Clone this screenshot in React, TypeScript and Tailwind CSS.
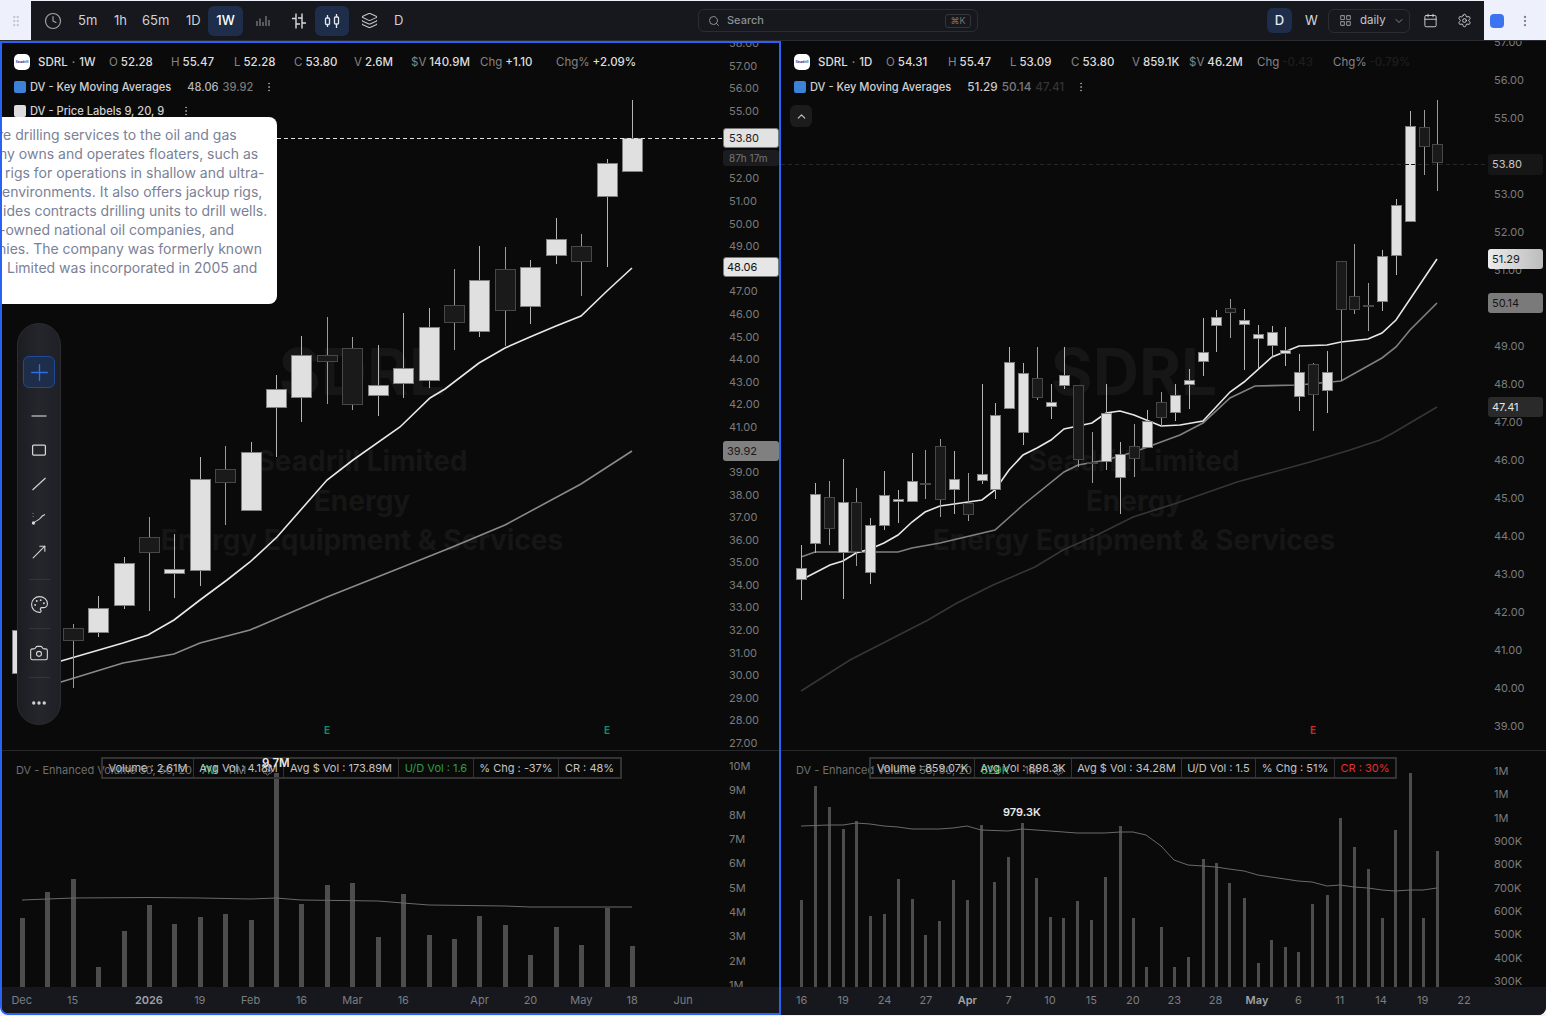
import { Fragment } from "react"
import {
  Calendar,
  Camera,
  ChevronDown,
  ChevronUp,
  Clock,
  Ellipsis,
  EllipsisVertical,
  GripVertical,
  LayoutGrid,
  Layers,
  Minus,
  MoveUpRight,
  Palette,
  Plus,
  Search,
  Settings,
} from "lucide-react"

type Candle = [x: number, wickTop: number, wickBottom: number, bodyTop: number, bodyBottom: number, up: number]
type Pt = [number, number]

const WEEK_CANDLES: Candle[] = [
  [22, 600, 690, 630, 673, 1],
  [47, 590, 660, 610, 640, 1],
  [73, 624, 688, 628, 640, 0],
  [98, 596, 637, 608, 632, 1],
  [124, 557, 609, 563, 605, 1],
  [149, 517, 611, 537, 552, 0],
  [174, 534, 598, 569, 573, 1],
  [200, 457, 586, 479, 570, 1],
  [225, 446, 525, 469, 482, 0],
  [251, 442, 510, 452, 510, 1],
  [276, 375, 457, 389, 407, 1],
  [301, 336, 422, 355, 397, 1],
  [327, 317, 404, 355, 361, 0],
  [352, 337, 410, 348, 404, 0],
  [378, 345, 416, 385, 395, 1],
  [403, 313, 398, 368, 383, 1],
  [429, 308, 388, 327, 380, 1],
  [454, 269, 350, 305, 322, 0],
  [479, 246, 337, 280, 331, 1],
  [505, 247, 346, 269, 310, 0],
  [530, 260, 324, 267, 306, 1],
  [556, 218, 264, 239, 255, 1],
  [581, 234, 296, 246, 261, 0],
  [607, 159, 267, 163, 196, 1],
  [632, 100, 138, 138, 171, 1],
]

const DAY_CANDLES: Candle[] = [
  [801, 545, 600, 568, 579, 1],
  [815, 483, 553, 494, 543, 1],
  [829, 481, 545, 497, 528, 0],
  [843, 459, 599, 502, 552, 1],
  [856, 488, 566, 502, 551, 0],
  [870, 518, 584, 525, 572, 1],
  [884, 471, 530, 495, 525, 1],
  [898, 490, 523, 499, 501, 1],
  [912, 453, 502, 481, 501, 1],
  [925, 450, 499, 483, 484, 0],
  [940, 439, 517, 446, 499, 0],
  [954, 451, 514, 479, 489, 1],
  [968, 473, 521, 503, 514, 0],
  [982, 384, 484, 474, 480, 1],
  [995, 403, 499, 415, 489, 1],
  [1009, 347, 408, 362, 408, 1],
  [1023, 363, 445, 373, 432, 1],
  [1037, 347, 400, 378, 397, 0],
  [1051, 384, 419, 402, 406, 1],
  [1064, 347, 389, 375, 385, 1],
  [1078, 385, 467, 385, 459, 0],
  [1092, 432, 483, 462, 463, 0],
  [1106, 384, 470, 413, 461, 1],
  [1120, 442, 514, 454, 477, 1],
  [1134, 424, 477, 446, 458, 0],
  [1147, 410, 448, 421, 447, 1],
  [1161, 392, 426, 402, 417, 0],
  [1175, 384, 421, 395, 412, 1],
  [1189, 369, 409, 380, 384, 1],
  [1203, 318, 376, 352, 361, 1],
  [1216, 310, 352, 317, 325, 1],
  [1230, 299, 338, 308, 312, 0],
  [1244, 309, 370, 320, 324, 1],
  [1258, 325, 368, 334, 338, 1],
  [1272, 326, 357, 332, 345, 1],
  [1285, 327, 366, 350, 353, 1],
  [1299, 354, 411, 372, 396, 1],
  [1313, 363, 431, 364, 394, 0],
  [1327, 351, 413, 372, 390, 1],
  [1341, 261, 381, 261, 309, 0],
  [1354, 244, 314, 296, 309, 0],
  [1368, 283, 331, 305, 306, 0],
  [1382, 250, 311, 256, 301, 1],
  [1396, 199, 275, 205, 255, 1],
  [1410, 111, 221, 126, 221, 1],
  [1424, 110, 175, 127, 146, 0],
  [1437, 100, 191, 144, 162, 0],
]

const WEEK_FAST: Pt[] = [[40, 667], [61, 661], [123, 643], [148, 635], [174, 620], [200, 600], [227, 580], [250, 562], [277, 537], [327, 480], [353, 460], [400, 427], [430, 398], [445, 389], [479, 363], [505, 348], [530, 337], [556, 326], [581, 316], [607, 291], [632, 268]]
const WEEK_SLOW: Pt[] = [[40, 688], [61, 682], [123, 663], [174, 654], [200, 643], [250, 630], [327, 597], [400, 568], [450, 548], [505, 525], [581, 484], [632, 451]]
const DAY_FAST: Pt[] = [[801, 580], [830, 565], [843, 561], [856, 553], [870, 549], [884, 543], [898, 535], [912, 522], [925, 512], [940, 506], [982, 500], [995, 490], [1009, 470], [1023, 455], [1037, 448], [1051, 440], [1064, 429], [1092, 423], [1106, 413], [1120, 411], [1134, 415], [1161, 426], [1180, 425], [1203, 421], [1230, 392], [1244, 382], [1272, 357], [1299, 346], [1327, 345], [1341, 342], [1368, 339], [1382, 333], [1396, 320], [1437, 259]]
const DAY_MID: Pt[] = [[801, 557], [815, 552], [856, 552], [898, 552], [912, 548], [940, 543], [995, 530], [1023, 505], [1064, 472], [1078, 465], [1106, 460], [1134, 452], [1161, 442], [1180, 435], [1203, 423], [1230, 398], [1255, 386], [1299, 385], [1341, 381], [1382, 358], [1396, 347], [1410, 330], [1437, 303]]
const DAY_SLOW: Pt[] = [[801, 691], [850, 660], [928, 620], [957, 603], [993, 585], [1035, 567], [1063, 550], [1097, 535], [1133, 517], [1177, 503], [1237, 482], [1310, 462], [1350, 450], [1380, 440], [1393, 433], [1437, 407]]

const WEEK_VOL: Pt[] = [[22, 918], [47, 892], [73, 879], [98, 967], [124, 931], [149, 905], [174, 924], [200, 917], [225, 914], [251, 920], [276, 773], [301, 904], [327, 885], [352, 883], [378, 937], [403, 894], [429, 935], [454, 939], [479, 916], [505, 925], [530, 955], [556, 927], [581, 945], [607, 908], [632, 946]]
const DAY_VOL: Pt[] = [[801, 900], [815, 786], [829, 807], [843, 829], [856, 821], [870, 916], [884, 914], [898, 879], [912, 899], [925, 935], [939, 921], [953, 880], [967, 900], [981, 825], [994, 882], [1008, 857], [1022, 823], [1036, 878], [1050, 917], [1063, 918], [1077, 901], [1091, 920], [1105, 877], [1120, 826], [1133, 918], [1146, 967], [1161, 927], [1174, 967], [1188, 957], [1203, 859], [1216, 863], [1229, 883], [1244, 898], [1258, 963], [1271, 940], [1285, 947], [1298, 952], [1312, 904], [1327, 895], [1340, 818], [1354, 847], [1368, 869], [1382, 918], [1395, 830], [1410, 773], [1423, 918], [1437, 851]]
const WEEK_VOL_AVG: Pt[] = [[22, 900], [73, 898], [149, 897.5], [200, 898], [251, 899], [276, 898], [301, 900], [378, 901], [403, 903], [429, 905], [505, 906], [530, 907], [632, 907]]
const DAY_VOL_AVG: Pt[] = [[801, 826], [829, 825], [843, 825], [856, 823], [870, 824], [884, 826], [898, 827], [912, 829], [925, 829], [939, 829], [953, 828], [967, 826], [981, 830], [1008, 831], [1022, 829], [1036, 830], [1050, 831], [1077, 833], [1091, 833], [1105, 833], [1120, 832], [1133, 832], [1146, 835], [1161, 846], [1174, 860], [1188, 865], [1203, 866], [1216, 867], [1229, 869], [1244, 871], [1258, 875], [1271, 877], [1285, 879], [1298, 881], [1312, 882], [1327, 886], [1340, 885], [1354, 887], [1368, 888], [1382, 890], [1395, 891], [1410, 890], [1423, 890], [1437, 888]]

const WEEK_PRICES = Array.from({ length: 32 }, (_, i) => `${58 - i}.00`)
// 54.00 sits right under the last-price tag, the reference doesn't show it
const DAY_PRICES = Array.from({ length: 19 }, (_, i) => (57 - i === 54 ? "" : `${57 - i}.00`))
const WEEK_VOL_AXIS = ["10M", "9M", "8M", "7M", "6M", "5M", "4M", "3M", "2M", "1M"]
const DAY_VOL_AXIS = ["1M", "1M", "1M", "900K", "800K", "700K", "600K", "500K", "400K", "300K"]
const WEEK_DATES = ["Dec", "", "15", "", "", "2026", "", "19", "", "Feb", "", "16", "", "Mar", "", "16", "", "", "Apr", "", "20", "", "May", "", "18", "", "Jun"]
const DAY_DATES = ["16", "19", "24", "27", "Apr", "7", "10", "15", "20", "23", "28", "May", "6", "11", "14", "19", "22"]

const ABOUT_LINES = [
  { text: "re drilling services to the oil and gas", cls: "-ml-[4px]" },
  { text: "ny owns and operates floaters, such as", cls: "-ml-[3px]" },
  { text: "rigs for operations in shallow and ultra-", cls: "ml-[3px]" },
  { text: "environments. It also offers jackup rigs,", cls: "ml-0" },
  { text: "ides contracts drilling units to drill wells.", cls: "ml-px" },
  { text: "-owned national oil companies, and", cls: "-ml-[3px]" },
  { text: "nies. The company was formerly known", cls: "-ml-[4px]" },
  { text: "Limited was incorporated in 2005 and", cls: "ml-[5px]" },
]

function toPath(points: Pt[]) {
  return points.map(([x, y], i) => `${i === 0 ? "M" : "L"}${x} ${y}`).join(" ")
}

function Candles({ data, width }: { data: Candle[]; width: number }) {
  return (
    <g>
      {data.map(([x, wt, wb, bt, bb, up]) => (
        <g key={x}>
          <line x1={x + 0.5} x2={x + 0.5} y1={wt} y2={wb} stroke={up ? "#b4b4b4" : "#9a9a9a"} strokeWidth={1} />
          <rect
            x={x + 0.5 - width / 2}
            y={bt + 0.5}
            width={width}
            height={Math.max(bb - bt, 1)}
            fill={up ? "#e0e0e0" : "#1a1a1a"}
            stroke={up ? "#808080" : "#484848"}
            strokeWidth={1}
          />
        </g>
      ))}
    </g>
  )
}

function Watermark({ cx }: { cx: number }) {
  return (
    <g fill="#161616" fontWeight={700} textAnchor="middle">
      <text x={cx} y={395} fontSize={64}>SDRL</text>
      <text x={cx} y={471} fontSize={28}>Seadrill Limited</text>
      <text x={cx} y={511} fontSize={28}>Energy</text>
      <text x={cx} y={550} fontSize={28}>Energy Equipment &amp; Services</text>
    </g>
  )
}

function WeekChart() {
  return (
    <svg viewBox="2 43 720 707" className="h-[707px] w-[720px] shrink-0">
      <Watermark cx={362} />
      <path d={toPath(WEEK_SLOW)} fill="none" stroke="#8a8a8a" strokeWidth={1.6} />
      <path d={toPath(WEEK_FAST)} fill="none" stroke="#e8e8e8" strokeWidth={1.6} />
      <Candles data={WEEK_CANDLES} width={20} />
      <line x1={277} x2={722} y1={138.5} y2={138.5} stroke="#e0e0e0" strokeDasharray="4 3" />
      <text x={327} y={734} fill="#0f8a6a" fontSize={10} fontWeight={700} textAnchor="middle">E</text>
      <text x={607} y={734} fill="#0f8a6a" fontSize={10} fontWeight={700} textAnchor="middle">E</text>
    </svg>
  )
}

function DayChart() {
  return (
    <svg viewBox="781 41 707 709" className="h-[709px] w-[707px] shrink-0">
      <Watermark cx={1134} />
      <path d={toPath(DAY_SLOW)} fill="none" stroke="#363636" strokeWidth={1.6} />
      <path d={toPath(DAY_MID)} fill="none" stroke="#808080" strokeWidth={1.6} />
      <path d={toPath(DAY_FAST)} fill="none" stroke="#e8e8e8" strokeWidth={1.6} />
      <Candles data={DAY_CANDLES} width={10} />
      <line x1={781} x2={1488} y1={164.5} y2={164.5} stroke="#262626" strokeDasharray="4 3" />
      <line x1={1405} x2={1415} y1={164.5} y2={164.5} stroke="#111111" strokeDasharray="4 3" />
      <text x={1313} y={734} fill="#c62828" fontSize={10} fontWeight={700} textAnchor="middle">E</text>
    </svg>
  )
}

function VolumeBars({ bars, avg, viewBox, barWidth, className }: { bars: Pt[]; avg: Pt[]; viewBox: string; barWidth: number; className: string }) {
  return (
    <svg viewBox={viewBox} className={className}>
      {bars.map(([x, top]) => (
        <rect key={x} x={x + 0.5 - barWidth / 2} y={top} width={barWidth} height={987 - top} fill="#4d4d4d" />
      ))}
      <path d={toPath(avg)} fill="none" stroke="#6a6a6a" strokeWidth={1} />
    </svg>
  )
}

function Stat({ label, value, className, dim }: { label: string; value: string; className: string; dim?: boolean }) {
  return (
    <span className={`flex shrink-0 gap-[3px] whitespace-nowrap ${className}`}>
      <span className="text-[#858585]">{label}</span>
      <span className={dim ? "font-medium text-[#1e1e1e]" : "font-medium text-[#dedede]"}>{value}</span>
    </span>
  )
}

function Logo() {
  return (
    <span className="flex h-4 w-4 shrink-0 items-center justify-center overflow-hidden rounded-[5px] bg-white text-[3.5px] font-bold text-[#2b4a9b]">
      Seadrill
    </span>
  )
}

function TagCell({ children, green, red, className }: { children: string; green?: boolean; red?: boolean; className: string }) {
  const color = green ? "text-[#2f9e44]" : red ? "text-[#e03131]" : "text-[#c4c4c4]"
  return (
    <span className={`flex shrink-0 items-center justify-center whitespace-nowrap border-r border-[#333333] last:border-r-0 ${color} ${className}`}>
      {children}
    </span>
  )
}

function PriceAxis({ labels, className, children }: { labels: string[]; className: string; children?: React.ReactNode }) {
  return (
    <div className="relative flex-1 overflow-hidden">
      <div className={`flex flex-col justify-between text-[11px] leading-[14px] text-[#7c7c7c] ${className}`}>
        {labels.map((l, i) => (
          <span key={`${l}-${i}`} className="h-[14px]">{l}</span>
        ))}
      </div>
      {children}
    </div>
  )
}

function ToolbarDivider() {
  return <div className="my-[11px] h-px w-[21px] bg-[#33353b]" />
}

function DrawingTools() {
  return (
    <div className="absolute left-[15px] top-[280px] flex h-[402px] w-[44px] flex-col items-center rounded-[22px] border border-[#2b2d33] bg-gradient-to-r from-[#1b1d22] via-[#24262b] to-[#1e2025] pt-[32px] text-[#d6d6d6]">
      <div className="flex h-[32px] w-[32px] items-center justify-center rounded-md border border-[#1f4a9a] bg-[#1d2d4a] text-[#2f6fe0]">
        <Plus size={27} strokeWidth={1.2} />
      </div>
      <div className="mt-[11px] flex h-[34px] items-center text-[#a8a8a8]"><Minus size={24} strokeWidth={1.4} /></div>
      <div className="flex h-[34px] items-center">
        <svg width="16" height="16" viewBox="0 0 16 16" fill="none" stroke="currentColor" strokeWidth="1.25"><rect x="1.6" y="3" width="12.8" height="10" rx="1" /></svg>
      </div>
      <div className="flex h-[34px] items-center">
        <svg width="16" height="16" viewBox="0 0 16 16" fill="none" stroke="currentColor" strokeWidth="1.1"><path d="M1.5 14L14.5 2" /></svg>
      </div>
      <div className="flex h-[34px] items-center">
        <svg width="16" height="16" viewBox="0 0 16 16" fill="none" stroke="currentColor" strokeWidth="1.1">
          <path d="M2.5 13C6 10 8 10 9 8.5S11 5.5 14 4.5" />
          <circle cx="2.5" cy="13" r="1.1" fill="currentColor" />
          <path d="M2 3.5v.6M2.2 6.5v.6" strokeDasharray="1 1" />
        </svg>
      </div>
      <div className="flex h-[34px] items-center"><MoveUpRight size={20} strokeWidth={1.3} /></div>
      <div className="-mt-[1px]"><ToolbarDivider /></div>
      <div className="flex h-[26px] items-center"><Palette size={19} strokeWidth={1.4} /></div>
      <ToolbarDivider />
      <div className="flex h-[26px] items-center"><Camera size={20} strokeWidth={1.3} /></div>
      <ToolbarDivider />
      <div className="mt-px flex h-[26px] items-center"><Ellipsis size={18} strokeWidth={2.4} /></div>
    </div>
  )
}

function AboutCard() {
  return (
    <div className="absolute left-0 top-[74px] h-[187px] w-[275px] overflow-hidden rounded-r-lg bg-white pt-[8px] text-[14px] leading-[19px] text-[#7a8197]">
      {ABOUT_LINES.map((line) => (
        <div key={line.text} className={`whitespace-nowrap ${line.cls}`}>{line.text}</div>
      ))}
    </div>
  )
}

function TopBar() {
  return (
    <div className="flex h-[41px] shrink-0 items-stretch border-b border-[#2a2c31] pt-px">
      <div className="flex w-[31px] shrink-0 items-center justify-center bg-[#eef0fb] text-[#c3c6d0]">
        <GripVertical size={14} />
      </div>
      <div className="flex flex-1 items-center bg-[#16181d] text-[13px] text-[#cfd1d4]">
        <Clock size={18} strokeWidth={1.5} className="ml-[13px] text-[#a4a6aa]" />
        <span className="ml-[16px] w-[18px]">5m</span>
        <span className="ml-[18px] w-[12px]">1h</span>
        <span className="ml-[16px] w-[27px]">65m</span>
        <span className="ml-[17px] w-[14px]">1D</span>
        <span className="ml-[8px] flex h-[30px] w-[35px] items-center justify-center rounded-md bg-[#1d2d4a] font-medium text-white">1W</span>
        <svg width="14" height="12" viewBox="0 0 14 12" fill="none" stroke="#83858a" strokeWidth="1.2" className="ml-[13px]">
          <path d="M1 6v5M4 3.5V11M7 7v4M10 1v10M13 5v6" />
        </svg>
        <svg width="16" height="16" viewBox="0 0 16 16" fill="none" stroke="#d8dadd" strokeWidth="1.4" className="ml-[21px]">
          <path d="M5 0.5v15M11 0.5v15M1 5.5h4M5 11h4M7 5h4M11 10h4" />
        </svg>
        <span className="ml-[8px] flex h-[30px] w-[34px] items-center justify-center rounded-md bg-[#1d2d4a]">
          <svg width="16" height="16" viewBox="0 0 16 16" fill="none" stroke="#e6e8ea" strokeWidth="1.3">
            <rect x="1.5" y="5" width="4" height="6.5" rx="1" />
            <rect x="10.5" y="4" width="4" height="7" rx="1" />
            <path d="M3.5 2v3M3.5 11.5V14M12.5 1v3M12.5 11V15" />
          </svg>
        </span>
        <Layers size={17} strokeWidth={1.5} className="ml-[12px] text-[#c3c5c9]" />
        <span className="ml-[16px] w-[10px]">D</span>
        <div className="ml-[294px] flex h-[23px] w-[280px] items-center rounded-md border border-[#2b2d33] pl-[9px] text-[11px] text-[#8d8f94]">
          <Search size={12} />
          <span className="ml-[7px] font-medium">Search</span>
          <span className="ml-auto mr-[6px] flex h-[14px] w-[26px] items-center justify-center rounded-[3px] border border-[#34363c] text-[9px] text-[#6f7176]">⌘K</span>
        </div>
        <span className="ml-[289px] flex h-[25px] w-[25px] items-center justify-center rounded-md bg-[#1d2d4a] font-medium text-[#e6e8ea]">D</span>
        <span className="ml-[13px] w-[12px] text-[#d8dadd]">W</span>
        <div className="ml-[11px] flex h-[24px] w-[82px] items-center rounded-md border border-[#2b2d33] pl-[10px] text-[11.5px] text-[#c4c6ca]">
          <LayoutGrid size={13} className="text-[#85878c]" />
          <span className="ml-[8px]">daily</span>
          <ChevronDown size={12} className="ml-[7px] text-[#85878c]" />
        </div>
        <Calendar size={15} strokeWidth={1.5} className="ml-[13px] text-[#d0d2d6]" />
        <Settings size={15} strokeWidth={1.5} className="ml-[19px] text-[#d0d2d6]" />
      </div>
      <div className="flex w-[62px] shrink-0 items-center bg-[#eef0fb] pl-[6px]">
        <span className="h-[14px] w-[14px] rounded-[4px] bg-[#3b74ee]" />
        <EllipsisVertical size={14} className="ml-[14px] text-[#80838c]" />
      </div>
    </div>
  )
}

function WeekPane() {
  return (
    <div className="relative flex h-full w-[781px] shrink-0 flex-col overflow-hidden rounded-bl-lg border-2 border-[#2a62f5] bg-[#0a0a0a]">
      <div className="flex h-[707px] shrink-0">
        <WeekChart />
        <PriceAxis labels={WEEK_PRICES} className="-mt-[7px] h-[714px] pl-[7px]">
          <div className="absolute left-[1px] top-[85px] flex h-[20px] w-[56px] items-center rounded-[3px] border border-[#777777] bg-[#e2e2e2] pl-[5px] text-[11px] text-[#1c1c1c]">53.80</div>
          <div className="absolute left-[1px] top-[107px] flex h-[16px] w-[56px] items-center rounded-[3px] bg-[#1a1c20] pl-[6px] text-[10px] text-[#777777]">87h 17m</div>
          <div className="absolute left-[1px] top-[214px] flex h-[20px] w-[56px] items-center rounded-[3px] border border-[#777777] bg-[#e6e6e6] pl-[3px] text-[11px] text-[#111111]">48.06</div>
          <div className="absolute left-[1px] top-[398px] flex h-[20px] w-[56px] items-center rounded-[3px] bg-[#808080] pl-[4px] text-[11px] text-[#1a1a1a]">39.92</div>
        </PriceAxis>
      </div>
      <div className="relative flex h-[237px] shrink-0 border-t border-[#26282c]">
        <VolumeBars bars={WEEK_VOL} avg={WEEK_VOL_AVG} barWidth={5} viewBox="2 751 720 236" className="h-[236px] w-[720px] shrink-0" />
        <PriceAxis labels={WEEK_VOL_AXIS} className="mt-[8px] h-[233px] pl-[7px]" />
        <div className="absolute left-[14px] top-[12px] flex items-center whitespace-nowrap text-[11px] leading-[14px] text-[#6f6f6f]">
          <span>DV - Enhanced Volume 50, 50, 20</span>
          <span className="ml-[9px] font-medium text-[#22a35a]">7M</span>
          <span className="ml-[10px] text-[#777777]">11M</span>
          <Settings size={11} className="ml-[16px] text-[#777777]" />
        </div>
        <div className="absolute left-[99px] top-[6px] flex h-[22px] border-2 border-[#333333] text-[11px]">
          <TagCell className="w-[91px]">Volume : 2.61M</TagCell>
          <TagCell className="w-[90px]">Avg Vol : 4.18M</TagCell>
          <TagCell className="w-[115px]">Avg $ Vol : 173.89M</TagCell>
          <TagCell green className="w-[75px]">U/D Vol : 1.6</TagCell>
          <TagCell className="w-[85px]">% Chg : -37%</TagCell>
          <TagCell className="w-[61px]">CR : 48%</TagCell>
        </div>
        <span className="absolute left-[260px] top-[4px] text-[11.5px] font-semibold text-[#e8e8e8]">9.7M</span>
      </div>
      <div className="flex h-[27px] shrink-0 items-center bg-[#16181d] pl-[7px] text-[11px] text-[#7c7e82]">
        {WEEK_DATES.map((d, i) => (
          <span key={i} className={d === "2026" ? "flex w-[25.44px] shrink-0 justify-center font-semibold text-[#a0a2a6]" : "flex w-[25.44px] shrink-0 justify-center"}>
            {d}
          </span>
        ))}
      </div>
      <div className="absolute left-[12px] top-[11px] flex flex-col text-[11.1px] leading-[16px]">
        <div className="flex h-4 items-center text-[11.5px]">
          <span className="flex w-[95px] shrink-0 items-center gap-2">
            <Logo />
            <span className="whitespace-nowrap font-medium text-[#dedede]">SDRL <span className="mx-px text-[#858585]">·</span> 1W</span>
          </span>
          <Stat label="O" value="52.28" className="w-[62px]" />
          <Stat label="H" value="55.47" className="w-[63px]" />
          <Stat label="L" value="52.28" className="w-[60px]" />
          <Stat label="C" value="53.80" className="w-[60px]" />
          <Stat label="V" value="2.6M" className="w-[57px]" />
          <Stat label="$V" value="140.9M" className="w-[69px]" />
          <Stat label="Chg" value="+1.10" className="w-[76px]" />
          <Stat label="Chg%" value="+2.09%" className="w-[90px]" />
        </div>
        <div className="mt-[9px] flex h-4 items-center whitespace-nowrap font-medium text-[#d0d0d0]">
          <span className="h-3 w-3 rounded-[2px] bg-[#3b82d8]" />
          <span className="ml-[4px]">DV - Key Moving Averages</span>
          <span className="ml-[16px] text-[#b8b8b8]">48.06</span>
          <span className="ml-[4px] text-[#7a7a7a]">39.92</span>
          <EllipsisVertical size={12} className="ml-[10px] text-[#9a9a9a]" />
        </div>
        <div className="mt-[8px] flex h-4 items-center whitespace-nowrap font-medium text-[#d0d0d0]">
          <span className="h-3 w-3 rounded-[2px] bg-[#dedede]" />
          <span className="ml-[4px]">DV - Price Labels 9, 20, 9</span>
          <EllipsisVertical size={12} className="ml-[16px] text-[#9a9a9a]" />
        </div>
      </div>
      <AboutCard />
      <DrawingTools />
    </div>
  )
}

function DayPane() {
  return (
    <div className="relative flex h-full flex-1 flex-col overflow-hidden rounded-br-lg bg-[#0a0a0a]">
      <div className="flex h-[709px] shrink-0">
        <DayChart />
        <PriceAxis labels={DAY_PRICES} className="-mt-[6px] h-[698px] pl-[6px]">
          <div className="absolute left-0 top-[113px] flex h-[21px] w-[55px] items-center rounded-[3px] bg-[#161616] pl-[4px] text-[11px] text-[#c8c8c8]">53.80</div>
          <div className="absolute left-0 top-[208px] flex h-[20px] w-[55px] items-center rounded-[3px] bg-gradient-to-r from-[#ececec] to-[#bcbcbc] pl-[4px] text-[11px] text-[#1a1a1a]">51.29</div>
          <div className="absolute left-0 top-[252px] flex h-[20px] w-[55px] items-center rounded-[3px] bg-[#7a7a7a] pl-[4px] text-[11px] text-[#161616]">50.14</div>
          <div className="absolute left-0 top-[356px] flex h-[20px] w-[55px] items-center rounded-[3px] bg-[#2a2a2a] pl-[4px] text-[11px] text-[#e4e4e4]">47.41</div>
        </PriceAxis>
      </div>
      <div className="relative flex h-[237px] shrink-0 border-t border-[#26282c]">
        <VolumeBars bars={DAY_VOL} avg={DAY_VOL_AVG} barWidth={3} viewBox="781 751 707 236" className="h-[236px] w-[707px] shrink-0" />
        <PriceAxis labels={DAY_VOL_AXIS} className="mt-[13px] h-[224px] pl-[6px]" />
        <div className="absolute left-[15px] top-[12px] flex items-center whitespace-nowrap text-[11px] leading-[14px] text-[#6f6f6f]">
          <span>DV - Enhanced Volume 50, 50, 20</span>
          <span className="ml-[9px] font-medium text-[#22a35a]">829K</span>
          <span className="ml-[15px] text-[#777777]">1M</span>
          <Settings size={11} className="ml-[14px] text-[#777777]" />
        </div>
        <div className="absolute left-[88px] top-[6px] flex h-[22px] border-2 border-[#333333] text-[11px]">
          <TagCell className="w-[104px]">Volume : 859.07K</TagCell>
          <TagCell className="w-[97px]">Avg Vol : 898.3K</TagCell>
          <TagCell className="w-[110px]">Avg $ Vol : 34.28M</TagCell>
          <TagCell className="w-[74px]">U/D Vol : 1.5</TagCell>
          <TagCell className="w-[79px]">% Chg : 51%</TagCell>
          <TagCell red className="w-[60px]">CR : 30%</TagCell>
        </div>
        <span className="absolute left-[222px] top-[53px] text-[11px] font-semibold text-[#e8e8e8]">979.3K</span>
      </div>
      <div className="flex h-[28px] shrink-0 items-center bg-[#16181d] pb-[2px] text-[11px] text-[#7c7e82]">
        {DAY_DATES.map((d, i) => (
          <span key={i} className={d === "Apr" || d === "May" ? "flex w-[41.4px] shrink-0 justify-center font-semibold text-[#a0a2a6]" : "flex w-[41.4px] shrink-0 justify-center"}>
            {d}
          </span>
        ))}
      </div>
      <div className="absolute left-[13px] top-[13px] flex flex-col text-[11.1px] leading-[16px]">
        <div className="flex h-4 items-center text-[11.5px]">
          <span className="flex w-[92px] shrink-0 items-center gap-2">
            <Logo />
            <span className="whitespace-nowrap font-medium text-[#dedede]">SDRL <span className="mx-px text-[#858585]">·</span> 1D</span>
          </span>
          <Stat label="O" value="54.31" className="w-[62px]" />
          <Stat label="H" value="55.47" className="w-[62px]" />
          <Stat label="L" value="53.09" className="w-[61px]" />
          <Stat label="C" value="53.80" className="w-[61px]" />
          <Stat label="V" value="859.1K" className="w-[57px]" />
          <Stat label="$V" value="46.2M" className="w-[68px]" />
          <Stat dim label="Chg" value="-0.43" className="w-[76px]" />
          <Stat dim label="Chg%" value="-0.79%" className="w-[90px]" />
        </div>
        <div className="mt-[9px] flex h-4 items-center whitespace-nowrap font-medium text-[#d0d0d0]">
          <span className="h-3 w-3 rounded-[2px] bg-[#3b82d8]" />
          <span className="ml-[4px]">DV - Key Moving Averages</span>
          <span className="ml-[16px] text-[11.75px] text-[#c8c8c8]">51.29</span>
          <span className="ml-[4px] text-[11.75px] text-[#7a7a7a]">50.14</span>
          <span className="ml-[4px] text-[11.75px] text-[#333333]">47.41</span>
          <EllipsisVertical size={12} className="ml-[11px] text-[#9a9a9a]" />
        </div>
        <span className="-ml-[4px] mt-[10px] flex h-[22px] w-[22px] items-center justify-center rounded-md bg-[#1c1c1c] text-[#c8c8c8]">
          <ChevronUp size={13} />
        </span>
      </div>
    </div>
  )
}

export default function App() {
  return (
    <div className="flex h-[1016px] w-[1546px] flex-col overflow-hidden bg-[#eef0fb] pb-px [font-family:Inter,sans-serif]">
      <TopBar />
      <div className="flex min-h-0 flex-1">
        <Fragment>
          <WeekPane />
          <DayPane />
        </Fragment>
      </div>
    </div>
  )
}
